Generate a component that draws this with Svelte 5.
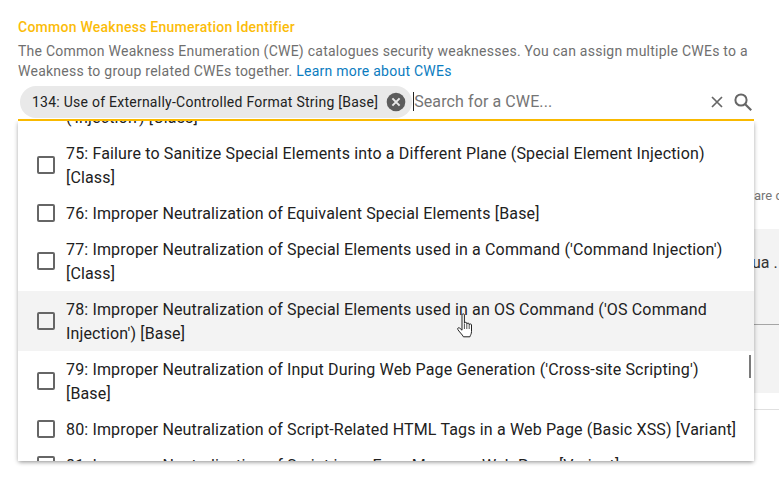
<script>
  const items = [
    { id: 74, text: "74: Improper Neutralization of Special Elements in Output Used by a Downstream\n('Injection') [Class]" },
    { id: 75, text: '75: Failure to Sanitize Special Elements into a Different Plane (Special Element Injection) [Class]' },
    { id: 76, text: '76: Improper Neutralization of Equivalent Special Elements [Base]' },
    { id: 77, text: "77: Improper Neutralization of Special Elements used in a Command ('Command Injection') [Class]" },
    { id: 78, text: "78: Improper Neutralization of Special Elements used in an OS Command ('OS Command Injection') [Base]", hover: true },
    { id: 79, text: "79: Improper Neutralization of Input During Web Page Generation ('Cross-site Scripting') [Base]" },
    { id: 80, text: '80: Improper Neutralization of Script-Related HTML Tags in a Web Page (Basic XSS) [Variant]' },
    { id: 81, text: '81: Improper Neutralization of Script in an Error Message Web Page [Variant]' }
  ];
</script>

<div class="page">
  <div class="backdrop">
    <div class="back-note">are c</div>
    <div class="back-table">
      <div class="back-head">ua .</div>
      <div class="back-row"></div>
    </div>
    <div class="back-rule"></div>
  </div>

  <div class="field">
    <div class="label">Common Weakness Enumeration Identifier</div>
    <p class="desc">The Common Weakness Enumeration (CWE) catalogues security weaknesses. You can assign multiple CWEs to a Weakness to group related CWEs together. <span class="link">Learn more about CWEs</span></p>
    <div class="control">
      <div class="chip">
        <span>134: Use of Externally-Controlled Format String [Base]</span>
        <svg class="chip-x" viewBox="0 0 20 20" width="20" height="20" aria-hidden="true">
          <circle cx="10" cy="10" r="9.3" fill="#5c5c5c" />
          <path d="M6.4 6.4l7.2 7.2M13.6 6.4l-7.2 7.2" stroke="#e9e9e9" stroke-width="2" fill="none" />
        </svg>
      </div>
      <div class="search"><span class="caret"></span>Search for a CWE...</div>
      <svg class="ic-x" viewBox="0 0 14 14" width="14" height="14" aria-hidden="true">
        <path d="M2 2l10 10M12 2L2 12" stroke="#666" stroke-width="1.7" fill="none" />
      </svg>
      <svg class="ic-s" viewBox="0 0 20 20" width="20" height="20" aria-hidden="true">
        <circle cx="8" cy="8" r="5.6" stroke="#666" stroke-width="2" fill="none" />
        <path d="M12 12l6.2 6.2" stroke="#666" stroke-width="2.2" fill="none" />
      </svg>
    </div>

    <div class="menu">
      <div class="list">
        {#each items as item (item.id)}
          <div class="item" class:hover={item.hover}>
            <span class="box"></span>
            <span class="txt">{item.text}</span>
          </div>
        {/each}
      </div>
      <div class="thumb"></div>
    </div>

    <svg class="hand" viewBox="0 0 16 25" width="20" height="25" aria-hidden="true">
      <path d="M5 1.800c0-1.300 2.400-1.300 2.400 0v8.500c0-1.300 2.400-1.300 2.400 0v.7c0-1.200 2.400-1.200 2.400 0v.8c0-1.100 2.300-1.100 2.300 0v6.800c0 2.500-1.200 3.600-1.600 5.200H6.400c-.8-2-4.700-5.500-5.600-7.400-.6-1.300.9-2.300 2-1.200L5 17.200z" fill="#fff" stroke="#222" stroke-width="1" stroke-linejoin="round" />
      <path d="M7.400 11v5M9.800 11v5M12.200 12v4" stroke="#222" stroke-width=".8" fill="none" />
    </svg>
  </div>
</div>

<style>
  :global(body) {
    margin: 0;
    background: #fff;
  }
  .page {
    position: relative;
    width: 779px;
    height: 478px;
    overflow: hidden;
    font-family: Roboto, sans-serif;
  }
  .backdrop {
    position: absolute;
    left: 700px;
    top: 188px;
    width: 79px;
  }
  .back-note {
    font-size: 13px;
    line-height: 16px;
    color: #757575;
    padding-left: 54px;
    white-space: nowrap;
  }
  .back-table {
    margin-top: 25px;
    background: #f3f3f3;
    height: 164px;
  }
  .back-head {
    height: 96px;
    box-sizing: border-box;
    padding: 24px 0 0 52px;
    font-size: 16px;
    line-height: 20px;
    color: #333;
    white-space: nowrap;
    border-bottom: 1px solid #a5a5a5;
  }
  .back-rule {
    height: 1px;
    margin-top: 16px;
    background: #e0e0e0;
  }
  .field {
    position: relative;
    padding: 19px 25px 0 18px;
  }
  .label {
    font-size: 14px;
    line-height: 16px;
    font-weight: 500;
    letter-spacing: 0.25px;
    color: #fbbc09;
  }
  .desc {
    margin: 6px 0 0;
    font-size: 14px;
    line-height: 20px;
    letter-spacing: 0.25px;
    color: #6f6f6f;
  }
  .link {
    color: #0b7cc0;
  }
  .control {
    display: flex;
    align-items: center;
    height: 34px;
    margin-top: 4px;
    padding: 0 1px 0 2px;
    border-bottom: 2px solid #f9b900;
    box-sizing: content-box;
  }
  .chip {
    display: flex;
    align-items: center;
    gap: 8px;
    height: 32px;
    padding: 0 6px 0 12px;
    border-radius: 16px;
    background: #e9e9e9;
    font-size: 14px;
    letter-spacing: 0.25px;
    color: #222;
    white-space: nowrap;
    flex: none;
  }
  .chip-x {
    flex: none;
  }
  .search {
    position: relative;
    flex: 1;
    margin-left: 2px;
    font-size: 16px;
    letter-spacing: 0.1px;
    line-height: 20px;
    color: #757575;
  }
  .caret {
    position: absolute;
    left: -1px;
    top: 0;
    width: 1px;
    height: 19px;
    background: #222;
  }
  .ic-x {
    flex: none;
    margin-right: 9px;
  }
  .ic-s {
    flex: none;
  }
  .menu {
    position: relative;
    height: 340px;
    overflow: hidden;
    background: #fff;
    box-shadow: 0 2px 4px -1px rgba(0, 0, 0, 0.3), 0 1px 5px rgba(0, 0, 0, 0.18);
    clip-path: inset(0 -8px -8px -8px);
  }
  .list {
    margin-top: -46px;
  }
  .item {
    display: flex;
    align-items: center;
    gap: 11px;
    padding: 7px 16px 5px 19px;
    min-height: 24px;
    font-size: 16px;
    line-height: 24px;
    letter-spacing: 0.15px;
    color: #212121;
  }
  .item.hover {
    background: #f3f3f3;
  }
  .box {
    flex: none;
    width: 14px;
    height: 14px;
    margin-bottom: 2px;
    border: 2px solid #666;
    border-radius: 2px;
  }
  .txt {
    flex: 1;
    white-space: pre-line;
  }
  .thumb {
    position: absolute;
    right: 3px;
    top: 234px;
    width: 2px;
    height: 23px;
    background: #7a7a7a;
  }
  .hand {
    position: absolute;
    left: 455px;
    top: 313px;
  }
</style>
